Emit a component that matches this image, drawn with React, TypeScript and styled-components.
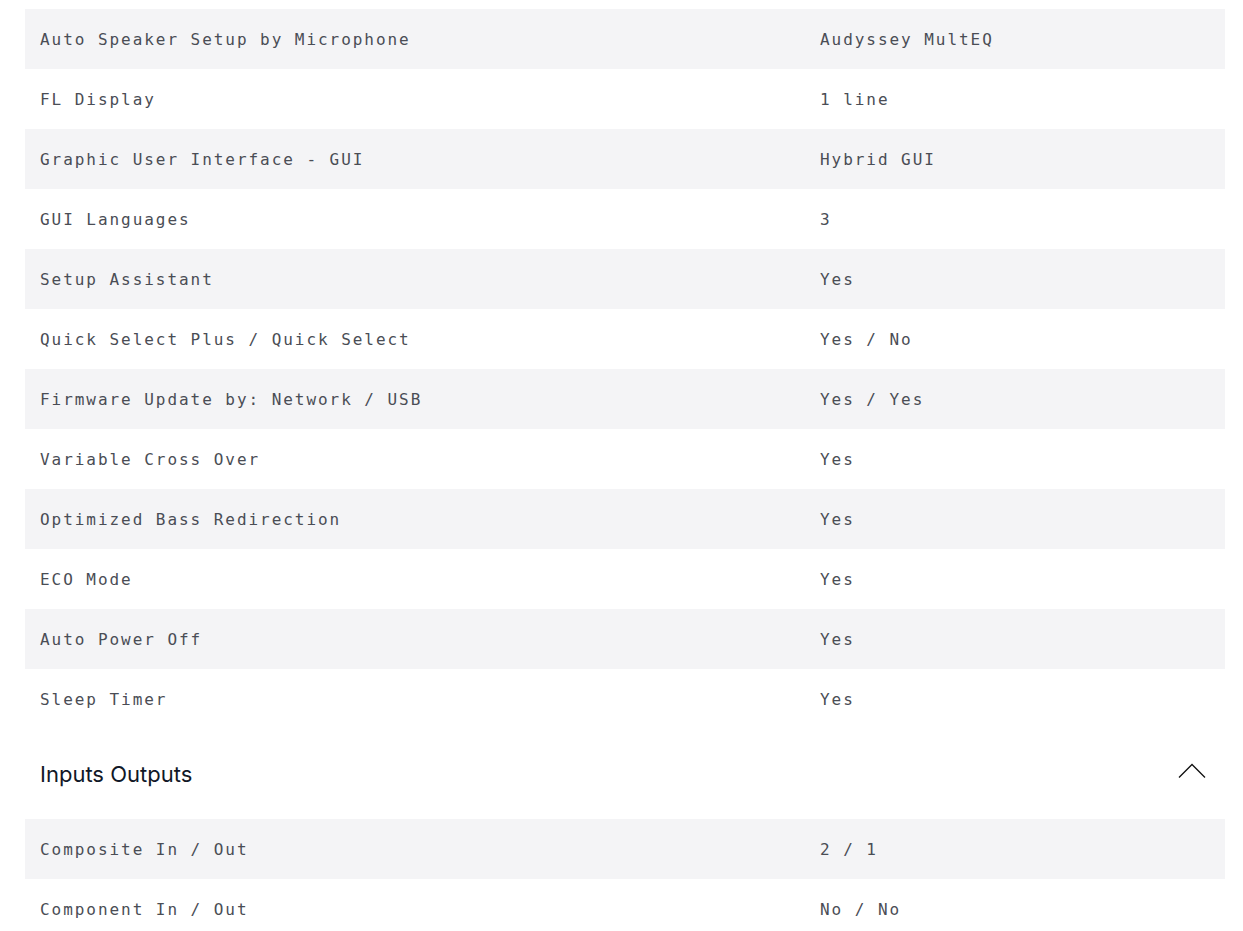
import styled, { createGlobalStyle } from "styled-components";

const GlobalStyle = createGlobalStyle`
  body {
    margin: 0;
    background: #ffffff;
  }
`;

const Page = styled.div`
  padding: 9px 18px 0 25px;
  display: flex;
  flex-direction: column;
`;

const SpecTable = styled.div`
  display: flex;
  flex-direction: column;
`;

const SpecRow = styled.div<{ $shaded: boolean }>`
  height: 60px;
  display: grid;
  grid-template-columns: 780px 1fr;
  align-items: center;
  padding: 1px 15px 0;
  box-sizing: border-box;
  background-color: ${(p) => (p.$shaded ? "#f4f4f6" : "#ffffff")};
  font-family: "DejaVu Sans Mono", "Liberation Mono", monospace;
  font-size: 16px;
  letter-spacing: 1.95px;
  color: #4a4d55;
  white-space: nowrap;
`;

const SectionHeader = styled.div`
  height: 90px;
  display: flex;
  align-items: center;
  justify-content: space-between;
  padding: 0 19px 0 15px;
`;

const SectionTitle = styled.h2`
  margin: 0;
  font-family: Inter, "Noto Sans", sans-serif;
  font-weight: 400;
  font-size: 22px;
  letter-spacing: 0;
  color: #111827;
`;

const Chevron = styled.svg`
  width: 28px;
  height: 16px;
  margin-top: -6px;
`;

const general: [string, string][] = [
  ["Auto Speaker Setup by Microphone", "Audyssey MultEQ"],
  ["FL Display", "1 line"],
  ["Graphic User Interface - GUI", "Hybrid GUI"],
  ["GUI Languages", "3"],
  ["Setup Assistant", "Yes"],
  ["Quick Select Plus / Quick Select", "Yes / No"],
  ["Firmware Update by: Network / USB", "Yes / Yes"],
  ["Variable Cross Over", "Yes"],
  ["Optimized Bass Redirection", "Yes"],
  ["ECO Mode", "Yes"],
  ["Auto Power Off", "Yes"],
  ["Sleep Timer", "Yes"],
];

const inputsOutputs: [string, string][] = [
  ["Composite In / Out", "2 / 1"],
  ["Component In / Out", "No / No"],
];

function Rows({ items }: { items: [string, string][] }) {
  return (
    <SpecTable>
      {items.map(([label, value], i) => (
        <SpecRow key={label} $shaded={i % 2 === 0}>
          <span>{label}</span>
          <span>{value}</span>
        </SpecRow>
      ))}
    </SpecTable>
  );
}

export default function App() {
  return (
    <>
      <GlobalStyle />
      <Page>
        <Rows items={general} />
        <SectionHeader>
          <SectionTitle>Inputs Outputs</SectionTitle>
          <Chevron viewBox="0 0 28 16" fill="none">
            <path d="M1 14.5L14 1.5L27 14.5" stroke="#111" strokeWidth="1.3" />
          </Chevron>
        </SectionHeader>
        <Rows items={inputsOutputs} />
      </Page>
    </>
  );
}
